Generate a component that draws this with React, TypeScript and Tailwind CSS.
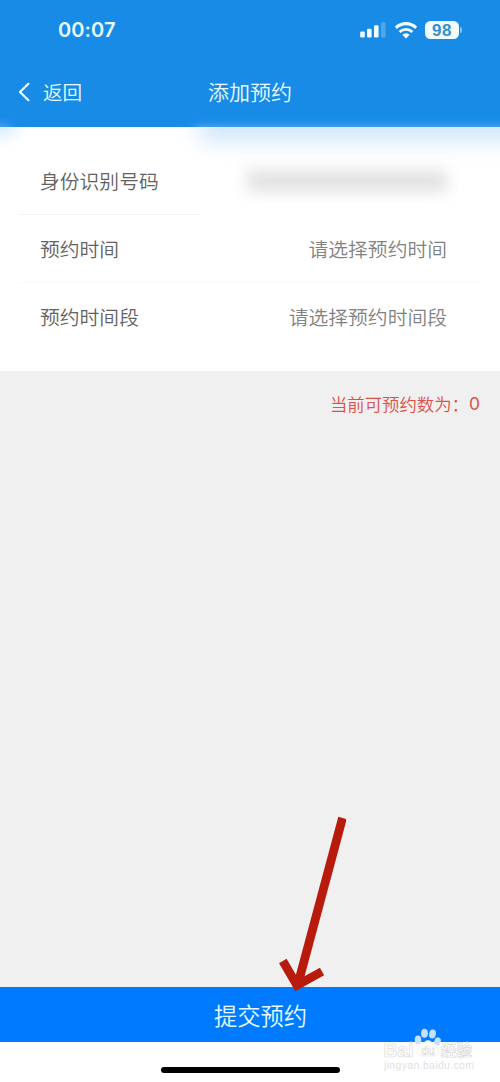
import React from "react";

const cjk = "font-['Noto_Sans_CJK_SC',sans-serif]";

function StatusBar() {
  return (
    <div className="flex h-[60px] items-center justify-between pl-[58px] pr-[38px]">
      <span className="font-['Inter',sans-serif] text-[20px] font-semibold leading-none tracking-[0.1px] text-[#e6fafd]">
        00:07
      </span>
      <div className="flex items-center">
        <svg width="26" height="16" viewBox="0 0 26 16" fill="#f0fcff">
          <rect x="0.2" y="9.5" width="4.6" height="6" rx="1.3" />
          <rect x="7" y="6.8" width="4.6" height="8.7" rx="1.3" />
          <rect x="14" y="3.3" width="4.6" height="12.2" rx="1.3" />
          <rect x="21" y="0.2" width="4.6" height="15.3" rx="1.3" opacity="0.25" />
        </svg>
        <svg className="ml-2" width="24" height="17" viewBox="0 0 24 17" fill="none" stroke="#f0fcff">
          <path d="M1.9 5.800a14.500 14.500 0 0 1 20.200 0" strokeWidth="3.2" />
          <path d="M5.6 9.900a9.200 9.200 0 0 1 12.800 0" strokeWidth="2.8" />
          <path d="M12 16.400l-3.700-3.600a5.200 5.200 0 0 1 7.400 0z" fill="#f0fcff" stroke="none" />
        </svg>
        <div className="ml-[7px] flex h-[18px] w-[34px] items-center justify-center rounded-[5.5px] bg-[#f0fcff] font-['Liberation_Sans',sans-serif] text-[17px] font-bold leading-none tracking-[0.5px] text-[#3b8fc9]">
          98
        </div>
        <div className="ml-px h-[6px] w-[2px] rounded-r-full bg-[#7fc2f5]" />
      </div>
    </div>
  );
}

function Header() {
  return (
    <header className="relative h-[127px] shrink-0 overflow-hidden bg-[#188be7]">
      <StatusBar />
      <div className="grid h-[63px] grid-cols-[1fr_auto_1fr] items-center text-[#ecfbff]">
        <div className="flex items-center pl-[18px]">
          <svg width="12" height="20" viewBox="0 0 12 20" fill="none" stroke="currentColor" strokeWidth="2.2" strokeLinecap="round" strokeLinejoin="round">
            <path d="M10.4 1.8L2 10l8.4 8.2" />
          </svg>
          <span className="ml-[13px] text-[19.6px] font-[350] leading-none">返回</span>
        </div>
        <h1 className="text-[21px] font-[350] leading-none">添加预约</h1>
      </div>
      <div className="absolute -bottom-[8px] left-[195px] h-[8px] w-[330px] bg-[#a6d3f8] opacity-60 blur-[4px]" />
      <div className="absolute -bottom-[8px] -left-[12px] h-[10px] w-[22px] bg-[#a6d3f8] opacity-40 blur-[5px]" />
    </header>
  );
}

function Row({ label, value }: { label: string; value?: string }) {
  return (
    <div className="flex h-[68px] items-center justify-between pl-5 pr-[33px] text-[19.8px] font-[350] leading-none">
      <span className="text-[#626262]">{label}</span>
      {value ? (
        <span className="text-[#828282]">{value}</span>
      ) : (
        <span className="h-[20px] w-[200px] bg-[#dfdfdf] blur-[8px]" />
      )}
    </div>
  );
}

function Watermark() {
  return (
    <div className="absolute left-[383px] top-[1028px] h-[45px] w-[96px]">
      <svg width="96" height="45" viewBox="0 0 96 45" fontFamily="Liberation Sans, Noto Sans CJK SC, sans-serif">
        <path d="M45 12.500c4 0 5 4 8 6.500c4 3 3 9-2 9h-12c-5 0-6-6-2-9c3-2.500 4-6.500 8-6.500z" fill="#fff" stroke="#e6e6e6" strokeWidth="0.6" />
        <g fill="#c4e0ff">
          <ellipse cx="35" cy="12" rx="3.3" ry="4.4" />
          <ellipse cx="41.500" cy="5.300" rx="3.4" ry="4.500" />
          <ellipse cx="49.500" cy="6" rx="3.4" ry="4.500" transform="rotate(10 49.500 6)" />
          <ellipse cx="54.500" cy="13.300" rx="3.2" ry="4" transform="rotate(18 54.500 13.300)" />
        </g>
        <g fill="#fff" stroke="#dadada" strokeWidth="0.7" fontWeight="bold">
          <text x="0.500" y="28.500" fontSize="20" textLength="30" lengthAdjust="spacingAndGlyphs">Bai</text>
          <text x="38" y="27" fontSize="13" textLength="14" lengthAdjust="spacingAndGlyphs">du</text>
          <text x="58" y="28" fontSize="15.500" textLength="31" lengthAdjust="spacingAndGlyphs">经验</text>
        </g>
        <text x="1" y="41" fontSize="10.500" fill="#dfdfdf" textLength="90">jingyan.baidu.com</text>
      </svg>
    </div>
  );
}

export default function App() {
  return (
    <div className={`relative flex h-[1082px] w-[500px] flex-col overflow-hidden bg-[#f0f0f0] ${cjk}`}>
      <Header />
      <section className="relative h-[244px] shrink-0 overflow-hidden bg-white px-5 pt-5">
        <div className="absolute -top-[18px] left-[200px] h-[32px] w-[330px] bg-[#cfe6fa] blur-[11px]" />
        <div className="absolute -top-[14px] -left-[16px] h-[22px] w-[32px] bg-[#d3eafc] blur-[8px]" />
        <div className="relative">
          <Row label="身份识别号码" />
          <div className="-mt-px h-px w-[181px] bg-[#f4f4f4]" />
          <Row label="预约时间" value="请选择预约时间" />
          <div className="-mt-px h-px bg-[#f9f9f9]" />
          <Row label="预约时间段" value="请选择预约时间段" />
        </div>
      </section>
      <main className="flex flex-1 justify-end pr-5 pt-[24px]">
        <p className="flex h-[18px] items-center text-[17.4px] font-[350] leading-none text-[#dc5148]">
          <span>当前可预约数为：</span>
          <span className="font-['Inter',sans-serif] font-normal">0</span>
        </p>
      </main>
      <button className="flex h-[55px] shrink-0 items-center justify-center bg-[#007bff] pl-[21px] pt-[3px] text-[23.3px] font-[350] leading-none text-[#e5fbff]">
        提交预约
      </button>
      <footer className="flex h-10 shrink-0 justify-center bg-white pt-[25px]">
        <div className="h-[6px] w-[179px] rounded-full bg-black" />
      </footer>
      <svg className="absolute left-[270px] top-[810px]" width="76" height="185" viewBox="0 0 76 185" fill="none" stroke="#b81a0c" strokeWidth="8.7">
        <path d="M72.500 8L28.500 172" />
        <path d="M12.800 151L27 175.300L52 161.500" />
      </svg>
      <Watermark />
    </div>
  );
}
